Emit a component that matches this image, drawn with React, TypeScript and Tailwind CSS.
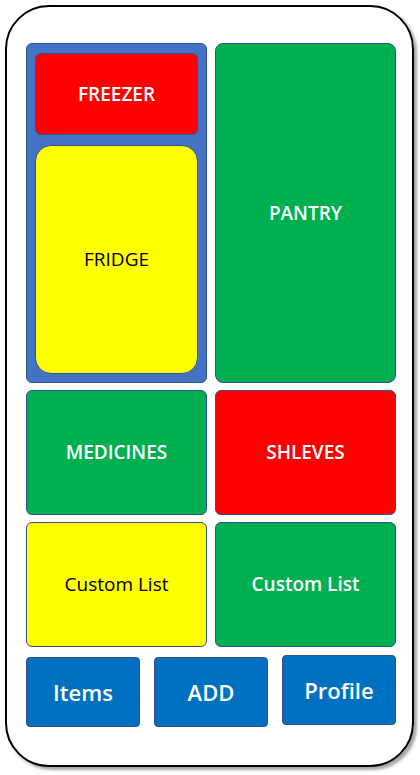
import React from "react";

const font = { fontFamily: '"Open Sans", "Noto Sans", sans-serif' };

function Tile({ label, className }: { label: string; className: string }) {
  return (
    <div
      className={`flex items-center justify-center border border-[#2f528f] rounded-[6px] text-[19px] ${className}`}
    >
      {label}
    </div>
  );
}

export default function App() {
  return (
    <div className="w-[420px] h-[775px] bg-white" style={font}>
      <div className="ml-[5px] mt-[5px] w-[409px] h-[762px] border-2 border-black rounded-[44px] shadow-[3px_3px_3px_rgba(0,0,0,0.35)] pl-[19px] pr-[16px] pt-[36px] flex flex-col">
        {/* top row */}
        <div className="flex gap-[8px] h-[340px]">
          <div className="w-[181px] bg-[#4472c4] rounded-[6px] border border-[#2f528f] px-[8px] pt-[9px] pb-[8px] flex flex-col gap-[10px]">
            <Tile label="FREEZER" className="h-[82px] bg-[#ff0000] text-white font-semibold" />
            <div className="flex-1 flex items-center justify-center bg-[#ffff00] border border-[#2f528f] rounded-[16px] text-[19px] text-black">
              FRIDGE
            </div>
          </div>
          <Tile label="PANTRY" className="w-[181px] bg-[#00b050] text-white font-semibold rounded-[8px]" />
        </div>

        {/* middle rows */}
        <div className="mt-[7px] grid grid-cols-2 gap-x-[8px] gap-y-[7px]">
          <Tile label="MEDICINES" className="h-[125px] bg-[#00b050] text-white font-semibold" />
          <Tile label="SHLEVES" className="h-[125px] bg-[#ff0000] text-white font-semibold" />
          <Tile label="Custom List" className="h-[125px] bg-[#ffff00] text-black" />
          <Tile label="Custom List" className="h-[125px] bg-[#00b050] text-white font-semibold" />
        </div>

        {/* bottom nav */}
        <div className="mt-[10px] flex justify-between">
          <button className="w-[114px] h-[70px] bg-[#0070c0] border border-[#2f528f] rounded-[4px] text-white font-semibold text-[22px]">
            Items
          </button>
          <button className="w-[114px] h-[70px] bg-[#0070c0] border border-[#2f528f] rounded-[4px] text-white font-semibold text-[22px]">
            ADD
          </button>
          <button className="w-[114px] h-[70px] -mt-[2px] bg-[#0070c0] border border-[#2f528f] rounded-[4px] text-white font-semibold text-[22px]">
            Profile
          </button>
        </div>
      </div>
    </div>
  );
}
